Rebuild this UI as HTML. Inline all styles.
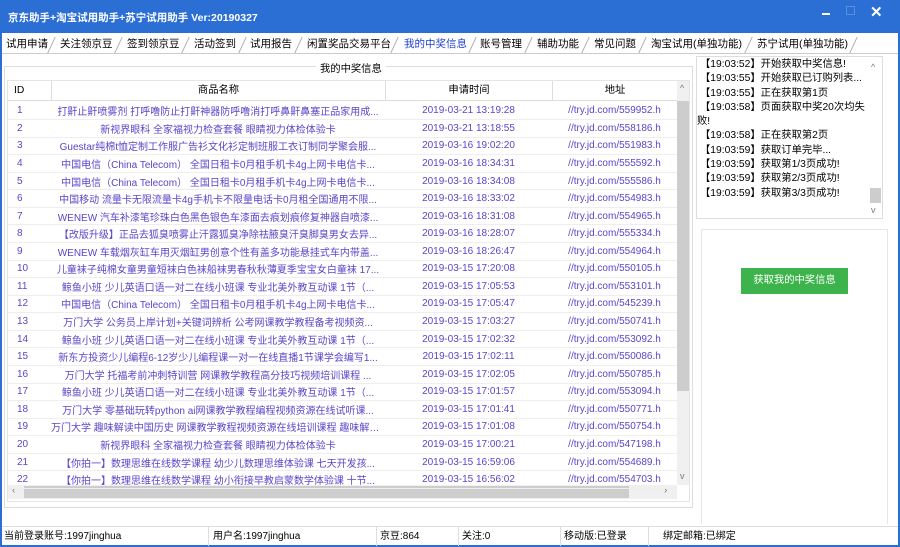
<!DOCTYPE html><html><head><meta charset="utf-8"><style>
*{margin:0;padding:0;box-sizing:border-box}
body{width:900px;height:547px;overflow:hidden;background:#fff;font-family:"Liberation Sans","Noto Sans CJK SC",sans-serif;font-size:10px;color:#000;position:relative}
.a{position:absolute}
#title{left:0;top:0;width:900px;height:33px;background:#2b6fd5;color:#fff;font-size:10.5px;font-weight:bold}
#frame{left:0;top:33px;width:900px;height:514px;border:2px solid #2b6fd5;border-top:none;background:#fff}
.tab{position:absolute;top:36px;height:17px;line-height:17px;font-size:10.5px;white-space:nowrap}
.sep{position:absolute;top:37px;width:1px;height:16px;background:#aaa;transform:skewX(-25deg)}
table{border-collapse:collapse;table-layout:fixed}
td{height:17.57px;border-bottom:1px solid #eee;white-space:nowrap;overflow:hidden;text-overflow:ellipsis;color:#5a46c8;font-size:10px;padding:0}
td.i{padding-left:9px}
td.c{text-align:center}
.log div{height:14.3px;line-height:14.3px;font-size:10.3px;white-space:nowrap}
</style></head><body>
<div class="a" id="title"><div class="a" style="left:8px;top:10px">京东助手+淘宝试用助手+苏宁试用助手 Ver:20190327</div>
<div class="a" style="left:822px;top:13px;width:8px;height:2px;background:#fff"></div>
<div class="a" style="left:846px;top:6px;width:9px;height:9px;border:1px solid #5a90e0"></div>
<div class="a" style="left:870px;top:3px;font-size:15px">✕</div></div>
<div class="a" id="frame"></div>
<div class="a" style="left:2px;top:33px;width:896px;height:20px;background:#fff"></div>
<div class="a" style="left:2px;top:53px;width:896px;height:1px;background:#ccc"></div>
<div class="tab" style="left:6px">试用申请</div><div class="sep" style="left:51px"></div>
<div class="tab" style="left:60px">关注领京豆</div><div class="sep" style="left:118px"></div>
<div class="tab" style="left:127px">签到领京豆</div><div class="sep" style="left:185px"></div>
<div class="tab" style="left:194px">活动签到</div><div class="sep" style="left:242px"></div>
<div class="tab" style="left:250px">试用报告</div><div class="sep" style="left:298px"></div>
<div class="tab" style="left:307px">闲置奖品交易平台</div><div class="sep" style="left:394px"></div>
<div class="tab" style="left:404px;color:#2040d0">我的中奖信息</div><div class="sep" style="left:472px"></div>
<div class="tab" style="left:480px">账号管理</div><div class="sep" style="left:528px"></div>
<div class="tab" style="left:537px">辅助功能</div><div class="sep" style="left:585px"></div>
<div class="tab" style="left:594px">常见问题</div><div class="sep" style="left:642px"></div>
<div class="tab" style="left:651px">淘宝试用(单独功能)</div><div class="sep" style="left:748px"></div>
<div class="tab" style="left:757px">苏宁试用(单独功能)</div><div class="sep" style="left:853px"></div>
<div class="a" style="left:4px;top:66px;width:689px;height:442px;border:1px solid #ddd"></div>
<div class="a" style="left:316px;top:60px;background:#fff;padding:0 4px;font-size:10.3px">我的中奖信息</div>
<div class="a" style="left:7px;top:80px;width:683px;height:422px;border:1px solid #e4e4e4;overflow:hidden">
<div class="a" style="left:0;top:0;width:669px;height:20px;border-bottom:1px solid #ddd;font-size:10.3px;line-height:20px">
<div class="a" style="left:6px">ID</div><div class="a" style="left:43px;width:1px;height:20px;background:#ddd"></div>
<div class="a" style="left:44px;width:333px;text-align:center">商品名称</div><div class="a" style="left:377px;width:1px;height:20px;background:#ddd"></div>
<div class="a" style="left:378px;width:166px;text-align:center">申请时间</div><div class="a" style="left:544px;width:1px;height:20px;background:#ddd"></div>
<div class="a" style="left:545px;width:124px;text-align:center">地址</div></div>
<div class="a" style="left:669px;top:0;width:13px;height:404px;background:#f0f0f0"><div class="a" style="left:0;top:20px;width:13px;height:290px;background:#cdcdcd"></div><div class="a" style="left:3px;top:2px;font-size:9px;color:#777">^</div><div class="a" style="left:3px;top:390px;font-size:9px;color:#777">v</div></div>
<div class="a" style="left:0;top:404px;width:669px;height:14px;background:#f0f0f0"><div class="a" style="left:16px;top:1px;width:605px;height:12px;background:#cdcdcd"></div><div class="a" style="left:4px;top:0;font-size:10px;color:#777">‹</div><div class="a" style="left:656px;top:0;font-size:10px;color:#777">›</div></div>
<table class="a" style="left:0;top:21px;width:669px">
<colgroup><col style="width:43px"><col style="width:334px"><col style="width:167px"><col style="width:125px"></colgroup>
<tr><td class="i">1</td><td class="c">打鼾止鼾喷雾剂 打呼噜防止打鼾神器防呼噜消打呼鼻鼾鼻塞正品家用成...</td><td class="c">2019-03-21 13:19:28</td><td class="c">//try.jd.com/559952.h</td></tr>
<tr><td class="i">2</td><td class="c">新视界眼科 全家福视力检查套餐 眼睛视力体检体验卡</td><td class="c">2019-03-21 13:18:55</td><td class="c">//try.jd.com/558186.h</td></tr>
<tr><td class="i">3</td><td class="c">Guestar纯棉t恤定制工作服广告衫文化衫定制班服工衣订制同学聚会服...</td><td class="c">2019-03-16 19:02:20</td><td class="c">//try.jd.com/551983.h</td></tr>
<tr><td class="i">4</td><td class="c">中国电信（China Telecom） 全国日租卡0月租手机卡4g上网卡电信卡...</td><td class="c">2019-03-16 18:34:31</td><td class="c">//try.jd.com/555592.h</td></tr>
<tr><td class="i">5</td><td class="c">中国电信（China Telecom） 全国日租卡0月租手机卡4g上网卡电信卡...</td><td class="c">2019-03-16 18:34:08</td><td class="c">//try.jd.com/555586.h</td></tr>
<tr><td class="i">6</td><td class="c">中国移动 流量卡无限流量卡4g手机卡不限量电话卡0月租全国通用不限...</td><td class="c">2019-03-16 18:33:02</td><td class="c">//try.jd.com/554983.h</td></tr>
<tr><td class="i">7</td><td class="c">WENEW 汽车补漆笔珍珠白色黑色银色车漆面去痕划痕修复神器自喷漆...</td><td class="c">2019-03-16 18:31:08</td><td class="c">//try.jd.com/554965.h</td></tr>
<tr><td class="i">8</td><td class="c">【改版升级】正品去狐臭喷雾止汗露狐臭净除祛腋臭汗臭脚臭男女去异...</td><td class="c">2019-03-16 18:28:07</td><td class="c">//try.jd.com/555334.h</td></tr>
<tr><td class="i">9</td><td class="c">WENEW 车载烟灰缸车用灭烟缸男创意个性有盖多功能悬挂式车内带盖...</td><td class="c">2019-03-16 18:26:47</td><td class="c">//try.jd.com/554964.h</td></tr>
<tr><td class="i">10</td><td class="c">儿童袜子纯棉女童男童短袜白色袜船袜男春秋秋薄夏季宝宝女白童袜 17...</td><td class="c">2019-03-15 17:20:08</td><td class="c">//try.jd.com/550105.h</td></tr>
<tr><td class="i">11</td><td class="c">鲸鱼小班 少儿英语口语一对二在线小班课 专业北美外教互动课 1节（...</td><td class="c">2019-03-15 17:05:53</td><td class="c">//try.jd.com/553101.h</td></tr>
<tr><td class="i">12</td><td class="c">中国电信（China Telecom） 全国日租卡0月租手机卡4g上网卡电信卡...</td><td class="c">2019-03-15 17:05:47</td><td class="c">//try.jd.com/545239.h</td></tr>
<tr><td class="i">13</td><td class="c">万门大学 公务员上岸计划+关键词辨析 公考网课教学教程备考视频资...</td><td class="c">2019-03-15 17:03:27</td><td class="c">//try.jd.com/550741.h</td></tr>
<tr><td class="i">14</td><td class="c">鲸鱼小班 少儿英语口语一对二在线小班课 专业北美外教互动课 1节（...</td><td class="c">2019-03-15 17:02:32</td><td class="c">//try.jd.com/553092.h</td></tr>
<tr><td class="i">15</td><td class="c">新东方投资少儿编程6-12岁少儿编程课一对一在线直播1节课学会编写1...</td><td class="c">2019-03-15 17:02:11</td><td class="c">//try.jd.com/550086.h</td></tr>
<tr><td class="i">16</td><td class="c">万门大学 托福考前冲刺特训营 网课教学教程高分技巧视频培训课程 ...</td><td class="c">2019-03-15 17:02:05</td><td class="c">//try.jd.com/550785.h</td></tr>
<tr><td class="i">17</td><td class="c">鲸鱼小班 少儿英语口语一对二在线小班课 专业北美外教互动课 1节（...</td><td class="c">2019-03-15 17:01:57</td><td class="c">//try.jd.com/553094.h</td></tr>
<tr><td class="i">18</td><td class="c">万门大学 零基础玩转python ai网课教学教程编程视频资源在线试听课...</td><td class="c">2019-03-15 17:01:41</td><td class="c">//try.jd.com/550771.h</td></tr>
<tr><td class="i">19</td><td class="c">万门大学 趣味解读中国历史 网课教学教程视频资源在线培训课程 趣味解读...</td><td class="c">2019-03-15 17:01:08</td><td class="c">//try.jd.com/550754.h</td></tr>
<tr><td class="i">20</td><td class="c">新视界眼科 全家福视力检查套餐 眼睛视力体检体验卡</td><td class="c">2019-03-15 17:00:21</td><td class="c">//try.jd.com/547198.h</td></tr>
<tr><td class="i">21</td><td class="c">【你拍一】数理思维在线数学课程 幼少儿数理思维体验课 七天开发孩...</td><td class="c">2019-03-15 16:59:06</td><td class="c">//try.jd.com/554689.h</td></tr>
<tr><td class="i">22</td><td class="c">【你拍一】数理思维在线数学课程 幼小衔接早教启蒙数学体验课 十节...</td><td class="c">2019-03-15 16:56:02</td><td class="c">//try.jd.com/554703.h</td></tr>
</table></div>
<div class="a log" style="left:696px;top:56px;width:187px;height:163px;border:1px solid #ddd;padding:1px 0 0 3px;overflow:hidden">
<div>【19:03:52】开始获取中奖信息!</div><div>【19:03:55】开始获取已订购列表...</div><div>【19:03:55】正在获取第1页</div><div>【19:03:58】页面获取中奖20次均失</div><div style="margin-left:-3px">败!</div><div>【19:03:58】正在获取第2页</div><div>【19:03:59】获取订单完毕...</div><div>【19:03:59】获取第1/3页成功!</div><div>【19:03:59】获取第2/3页成功!</div><div>【19:03:59】获取第3/3页成功!</div>
<div class="a" style="left:171px;top:0;width:14px;height:161px;background:#fff"><div class="a" style="left:2px;top:131px;width:11px;height:15px;background:#cdcdcd"></div><div class="a" style="left:3px;top:3px;font-size:9px;color:#777">^</div><div class="a" style="left:3px;top:146px;font-size:9px;color:#777">v</div></div></div>
<div class="a" style="left:701px;top:229px;width:187px;height:295px;border:1px solid #e6e6e6;border-bottom:none"></div>
<div class="a" style="left:741px;top:268px;width:107px;height:26px;background:#3cb44b;color:#fff;font-size:10.3px;line-height:26px;text-align:center">获取我的中奖信息</div>
<div class="a" style="left:2px;top:526px;width:896px;height:19px;background:#fff;border-top:1px solid #ddd;font-size:10px;line-height:19px">
<div class="a" style="left:2px">当前登录账号:1997jinghua</div><div class="a" style="left:206px;width:1px;height:19px;background:#ddd"></div>
<div class="a" style="left:211px">用户名:1997jinghua</div><div class="a" style="left:374px;width:1px;height:19px;background:#ddd"></div>
<div class="a" style="left:378px">京豆:864</div><div class="a" style="left:456px;width:1px;height:19px;background:#ddd"></div>
<div class="a" style="left:460px">关注:0</div><div class="a" style="left:558px;width:1px;height:19px;background:#ddd"></div>
<div class="a" style="left:562px">移动版:已登录</div><div class="a" style="left:646px;width:1px;height:19px;background:#ddd"></div>
<div class="a" style="left:661px">绑定邮箱:已绑定</div></div>
</body></html>
